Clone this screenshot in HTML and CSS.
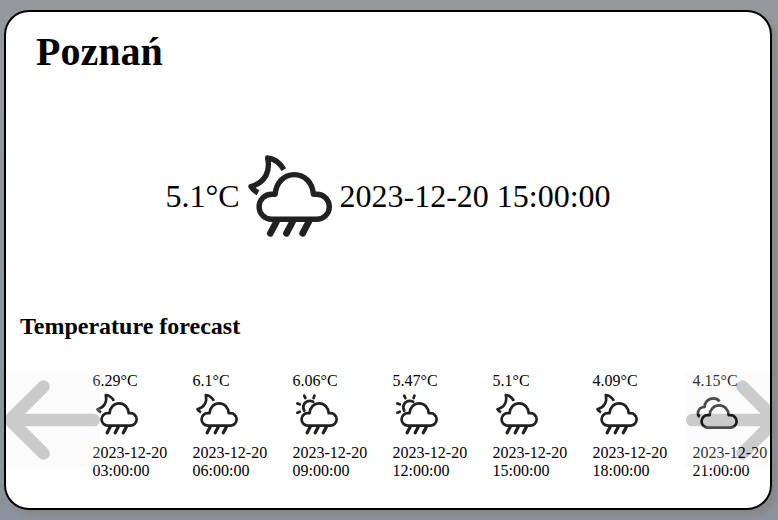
FILE: index.html
```html
<!DOCTYPE html>
<html lang="en">
<head>
<meta charset="utf-8">
<title>Weather</title>
<link rel="stylesheet" href="styles.css">
</head>
<body>
<svg class="defs" aria-hidden="true">
  <symbol id="cloud" viewBox="0 0 100 100"><path d="M31.6 73.2H76.8a12.5 12.5 0 0 0 0-25H73.4C72.500 36.500 64.500 28.600 54.3 28.600S36.100 36.500 35.2 48.2H31.6a12.5 12.5 0 0 0 0 25Z"/></symbol>
  <symbol id="rain" viewBox="0 0 100 100"><use href="#cloud"/><path class="drops" d="M36.6 75.500 30.3 87.4M52.7 75.500 46.4 87.4M68.9 75.500 62.6 87.4"/></symbol>
  <symbol id="night" viewBox="0 0 100 100"><use href="#rain"/><path class="moon" d="M43.800 23.6C40 17 35 12.700 27.600 12C30.500 25 25.500 36.500 11 40.500Q13.500 44.500 18 46.800"/></symbol>
  <symbol id="day" viewBox="0 0 100 100"><use href="#rain"/><path d="M24.500 43.500C19 34 26 22.500 38 24L42.500 25.700M24.400 13.300l2.400 5M44.900 13.300l-1.700 5M10.700 28.800l5 1.900M10.700 47.300l4.800-1.900"/></symbol>
  <symbol id="clouds" viewBox="0 0 100 100"><use href="#cloud" y="4"/><path class="moon" d="M15.500 55.500C9.500 52 10 37 25 36C26.500 19.500 45 13 55.500 24.500"/></symbol>
  <symbol id="arrow" viewBox="0 0 96 96"><path class="plate" d="M0 0h96v96H0z"/><path class="stroke" d="M89.700 48H6M39.500 14.600 6 48 39.500 81.400"/></symbol>
</svg>
<main class="card">
  <h1>Poznań</h1>
  <section class="current">
    <span>5.1°C</span><svg class="icon"><use href="#night"/></svg><span>2023-12-20 15:00:00</span>
  </section>
  <h2>Temperature forecast</h2>
  <section class="carousel">
    <div class="track">
      <div class="item">6.29°C<svg class="icon"><use href="#night"/></svg>2023-12-20 03:00:00</div>
      <div class="item">6.1°C<svg class="icon"><use href="#night"/></svg>2023-12-20 06:00:00</div>
      <div class="item">6.06°C<svg class="icon"><use href="#day"/></svg>2023-12-20 09:00:00</div>
      <div class="item">5.47°C<svg class="icon"><use href="#day"/></svg>2023-12-20 12:00:00</div>
      <div class="item">5.1°C<svg class="icon"><use href="#night"/></svg>2023-12-20 15:00:00</div>
      <div class="item">4.09°C<svg class="icon"><use href="#night"/></svg>2023-12-20 18:00:00</div>
      <div class="item">4.15°C<svg class="icon"><use href="#clouds"/></svg>2023-12-20 21:00:00</div>
    </div>
    <svg class="arrow prev"><use href="#arrow"/></svg>
    <svg class="arrow next"><use href="#arrow"/></svg>
  </section>
</main>
</body>
</html>
```

FILE: styles.css
```css
* { box-sizing: border-box; }
html { height: 100%; }
body {
  margin: 0;
  height: 520px;
  padding: 10px 6px 10px 4px;
  overflow: hidden;
  background: linear-gradient(#95999b, #8a929d);
  font-family: "Liberation Serif", serif;
  color: #000;
}
.defs { position: absolute; width: 0; height: 0; }
.card {
  height: 500px;
  border: 2px solid #000;
  border-radius: 25px;
  background: #fff;
  box-shadow: 5px 5px 5px #888;
  overflow: hidden;
  display: flex;
  flex-direction: column;
}
h1 { margin: 17px 0 0 30px; font-size: 40px; line-height: 46px; }
.current {
  display: flex;
  align-items: center;
  justify-content: center;
  height: 100px;
  margin-top: 71px;
  font-size: 32px;
}
.icon {
  fill: none;
  stroke: #212121;
  stroke-width: 5.4;
  stroke-linecap: round;
  stroke-linejoin: round;
}
.drops { stroke-width: 6.6; }
.moon { stroke-linecap: butt; }
.current .icon { width: 100px; height: 100px; }
h2 { margin: 67px 0 0 14px; font-size: 24px; line-height: 27px; }
.carousel { position: relative; margin-top: 32px; height: 108px; }
.track { display: flex; padding-left: 86.5px; }
.item { flex: 0 0 100px; padding-right: 20px; font-size: 16px; line-height: 18px; }
.item .icon { display: block; width: 50px; height: 50px; margin: -1px 0 5px -0.5px; }
.arrow { position: absolute; top: 0; width: 96px; height: 96px; opacity: 0.2; }
.plate { fill: #f0f0f0; }
.stroke { fill: none; stroke: #000; stroke-width: 12.6; stroke-linecap: round; stroke-linejoin: round; }
.prev { left: -2px; }
.next { left: 680px; transform: scaleX(-1); }
```
